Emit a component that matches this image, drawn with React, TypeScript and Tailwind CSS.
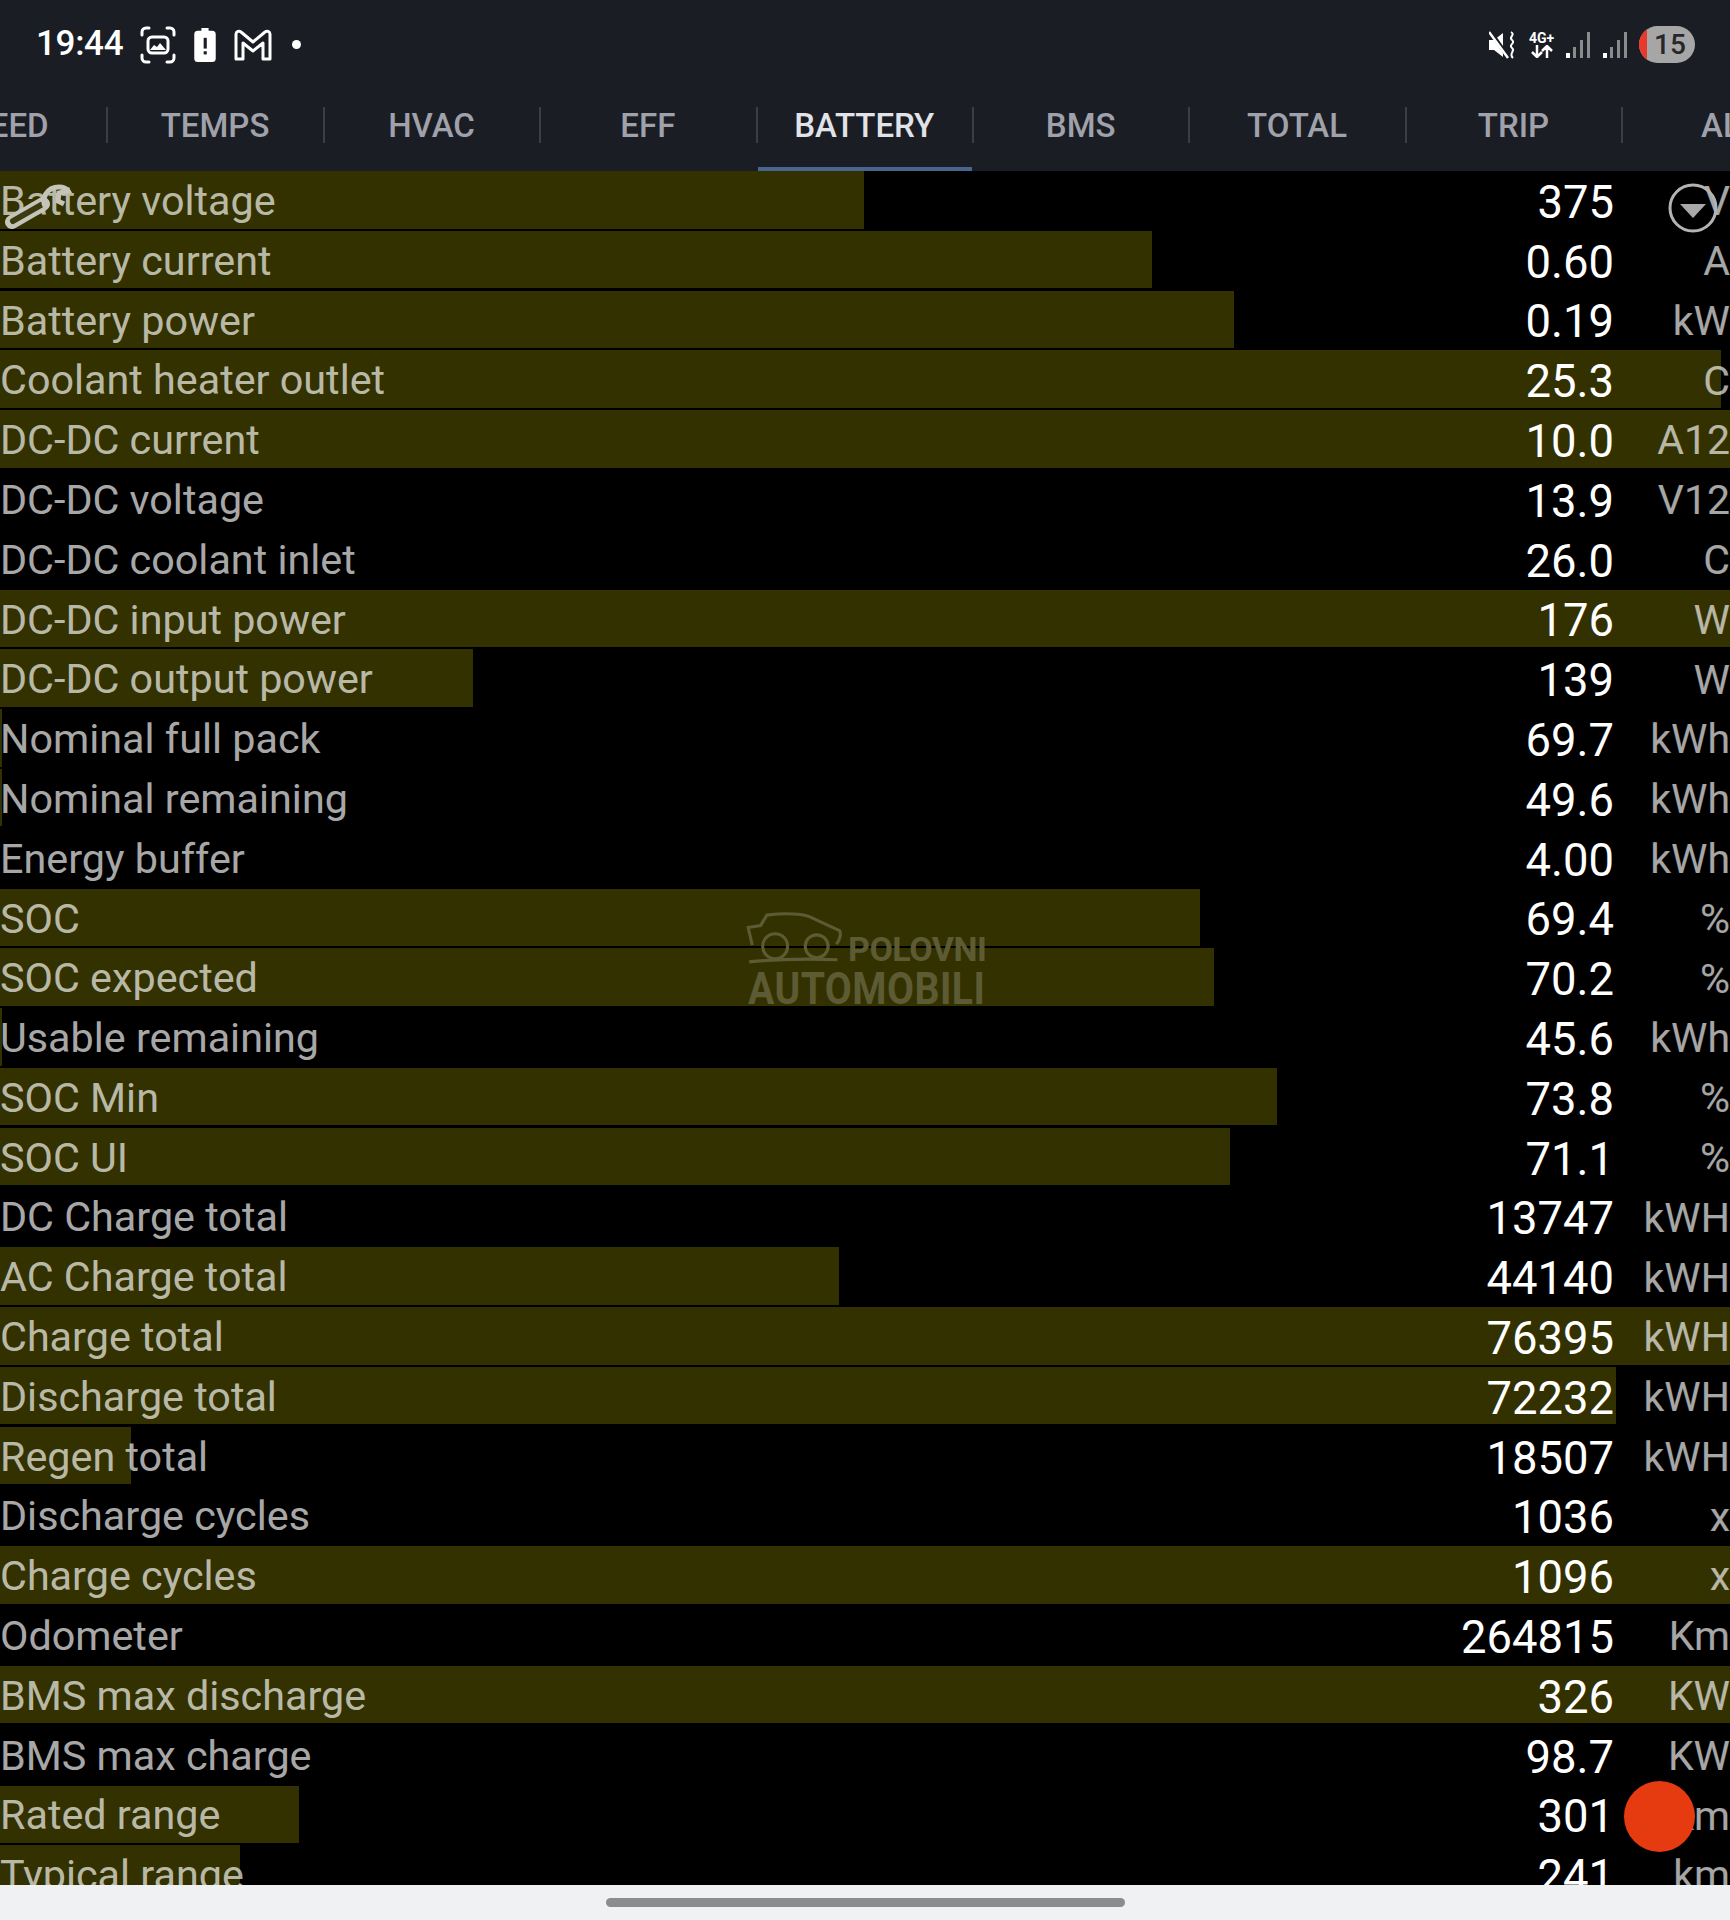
import React from 'react';

const tabs = ['SPEED', 'TEMPS', 'HVAC', 'EFF', 'BATTERY', 'BMS', 'TOTAL', 'TRIP', 'ALL'];

const rows = [
  { label: 'Battery voltage', value: '375', unit: 'V', bar: 864 },
  { label: 'Battery current', value: '0.60', unit: 'A', bar: 1152 },
  { label: 'Battery power', value: '0.19', unit: 'kW', bar: 1234 },
  { label: 'Coolant heater outlet', value: '25.3', unit: 'C', bar: 1721 },
  { label: 'DC-DC current', value: '10.0', unit: 'A12', bar: 1730 },
  { label: 'DC-DC voltage', value: '13.9', unit: 'V12', bar: 0 },
  { label: 'DC-DC coolant inlet', value: '26.0', unit: 'C', bar: 0 },
  { label: 'DC-DC input power', value: '176', unit: 'W', bar: 1730 },
  { label: 'DC-DC output power', value: '139', unit: 'W', bar: 473 },
  { label: 'Nominal full pack', value: '69.7', unit: 'kWh', bar: 2 },
  { label: 'Nominal remaining', value: '49.6', unit: 'kWh', bar: 2 },
  { label: 'Energy buffer', value: '4.00', unit: 'kWh', bar: 0 },
  { label: 'SOC', value: '69.4', unit: '%', bar: 1200 },
  { label: 'SOC expected', value: '70.2', unit: '%', bar: 1214 },
  { label: 'Usable remaining', value: '45.6', unit: 'kWh', bar: 2 },
  { label: 'SOC Min', value: '73.8', unit: '%', bar: 1277 },
  { label: 'SOC UI', value: '71.1', unit: '%', bar: 1230 },
  { label: 'DC Charge total', value: '13747', unit: 'kWH', bar: 0 },
  { label: 'AC Charge total', value: '44140', unit: 'kWH', bar: 839 },
  { label: 'Charge total', value: '76395', unit: 'kWH', bar: 1730 },
  { label: 'Discharge total', value: '72232', unit: 'kWH', bar: 1616 },
  { label: 'Regen total', value: '18507', unit: 'kWH', bar: 131 },
  { label: 'Discharge cycles', value: '1036', unit: 'x', bar: 0 },
  { label: 'Charge cycles', value: '1096', unit: 'x', bar: 1730 },
  { label: 'Odometer', value: '264815', unit: 'Km', bar: 0 },
  { label: 'BMS max discharge', value: '326', unit: 'KW', bar: 1730 },
  { label: 'BMS max charge', value: '98.7', unit: 'KW', bar: 0 },
  { label: 'Rated range', value: '301', unit: 'km', bar: 299 },
  { label: 'Typical range', value: '241', unit: 'km', bar: 240 },
];

function ScreenshotIcon() {
  return (
    <svg width="36" height="38" viewBox="0 0 36 38" fill="none" stroke="white" strokeWidth="3" strokeLinecap="round">
      <path d="M2 9V6a4 4 0 0 1 4-4h3M27 2h3a4 4 0 0 1 4 4v3M34 29v3a4 4 0 0 1-4 4h-3M9 36H6a4 4 0 0 1-4-4v-3" />
      <rect x="8" y="11" width="20" height="16" rx="4" />
      <path d="M10 24l4-5 3 2 3-4 6 7z" fill="white" stroke="none" />
    </svg>
  );
}

function BatteryAlertIcon() {
  return (
    <svg width="22" height="34" viewBox="0 0 24 38">
      <path d="M8 0h8v3h4a4 4 0 0 1 4 4v27a4 4 0 0 1-4 4H4a4 4 0 0 1-4-4V7a4 4 0 0 1 4-4h4z" fill="white" />
      <rect x="10.5" y="11" width="3.5" height="12" fill="#1b1d24" />
      <rect x="10.5" y="26" width="3.5" height="3.5" fill="#1b1d24" />
    </svg>
  );
}

function GmailIcon() {
  return (
    <svg width="38" height="32" viewBox="0 0 38 32" fill="none" stroke="white" strokeWidth="3" strokeLinejoin="round">
      <path d="M2 5a3 3 0 0 1 5-2l12 10L31 3a3 3 0 0 1 5 2v25h-7V14L19 22 9 14v16H2z" />
    </svg>
  );
}

function MuteVibrateIcon() {
  return (
    <svg width="28" height="28" viewBox="0 0 28 28" fill="none">
      <path d="M0 9h5l9-7v24l-9-7H0z" fill="white" />
      <path d="M1 0l19 27" stroke="#1b1d24" strokeWidth="4" />
      <path d="M0 1l19 26" stroke="white" strokeWidth="2.5" />
      <path d="M22 1c5 3-3 5 1 8s-4 5 0 8-4 5 1 10" stroke="white" strokeWidth="2" />
    </svg>
  );
}

function NetworkIcon() {
  return (
    <div className="flex w-[27px] flex-col items-center text-white">
      <span className="text-[14px] leading-[14px] font-bold whitespace-nowrap">4G+</span>
      <svg width="22" height="13" viewBox="0 0 22 13" fill="none" stroke="white" strokeWidth="2.5">
        <path d="M6 0v11M1 7l5 5 5-5M16 13V2M11 6l5-5 5 5" />
      </svg>
    </div>
  );
}

function SignalIcon() {
  return (
    <svg width="25" height="26" viewBox="0 0 25 26">
      <rect x="0" y="21" width="4" height="5" fill="white" />
      <rect x="7" y="15" width="3" height="11" fill="#8b8b8b" />
      <rect x="14" y="8" width="3" height="18" fill="#8b8b8b" />
      <rect x="21" y="0" width="3" height="26" fill="#8b8b8b" />
    </svg>
  );
}

function WrenchOverlay() {
  return (
    <svg className="absolute top-[184px] left-[5px]" width="68" height="48" viewBox="0 0 68 48" fill="none">
      <path d="M7 38L38 20" stroke="#c4c4b8" strokeWidth="14" strokeLinecap="round" />
      <path d="M8 37L36 21" stroke="#3d3a12" strokeWidth="6" strokeLinecap="round" />
      <path d="M41 24c-6-9 1-21 13-21 4 0 7 1 9 4l-9 2-1 8 6 3" stroke="#c4c4b8" strokeWidth="5" fill="none" />
    </svg>
  );
}

function WatermarkLogo() {
  return (
    <div className="absolute top-[912px] left-[746px] text-[#5d5b34]">
      <svg className="absolute top-0 left-0" width="104" height="54" viewBox="0 0 100 52" fill="none" stroke="currentColor" strokeWidth="3">
        <path d="M6 32L2 15l12-2L20 3c16-2 32-1 40 1l30 14c2 3 0 9-3 13" />
        <circle cx="28" cy="33" r="12" />
        <circle cx="68" cy="33" r="11" />
        <path d="M3 48c30-3 60-3 85-2" />
      </svg>
      <span className="absolute top-[17px] left-[102px] text-[34px] leading-[40px] font-bold tracking-[-0.5px] whitespace-nowrap [font-family:'Liberation_Sans_Narrow',Roboto,sans-serif]">
        POLOVNI
      </span>
      <span className="absolute top-[52px] left-[2px] origin-left scale-x-[0.89] text-[44px] leading-[50px] font-bold tracking-[0.5px] whitespace-nowrap [font-family:'Liberation_Sans_Narrow',Roboto,sans-serif]">
        AUTOMOBILI
      </span>
    </div>
  );
}

export default function App() {
  return (
    <div className="relative flex h-[1920px] w-[1730px] flex-col overflow-hidden bg-black [font-family:Roboto,sans-serif]">
      <div className="bg-[#1b1d24]">
        <div className="flex h-[89px] items-center justify-between pr-[35px] pl-[36px]">
          <div className="flex items-center">
            <span className="text-[35px] font-medium tracking-[-0.3px] text-white">19:44</span>
            <div className="ml-[17px] flex items-center gap-[18px]">
              <ScreenshotIcon />
              <BatteryAlertIcon />
              <GmailIcon />
            </div>
            <span className="ml-[20px] h-[9px] w-[9px] rounded-full bg-white" />
          </div>
          <div className="flex items-center">
            <MuteVibrateIcon />
            <div className="ml-[11px]">
              <NetworkIcon />
            </div>
            <div className="ml-[11px]">
              <SignalIcon />
            </div>
            <div className="ml-[12px]">
              <SignalIcon />
            </div>
            <div className="relative ml-[11px] flex h-[37px] w-[56px] items-center justify-center overflow-hidden rounded-full bg-[#a6a6a6] pl-[6px]">
              <span className="absolute top-0 bottom-0 left-0 w-[8px] bg-[#e8392b]" />
              <span className="text-[28px] leading-none font-medium text-[#26272b]">15</span>
            </div>
          </div>
        </div>
        <div className="-ml-[108px] flex h-[82px] w-[2000px]">
          {tabs.map((tab, i) => (
            <div key={tab} className="relative flex h-full w-[216.4px] shrink-0 items-center justify-center pr-[3px] pb-[8px]">
              <span className={tab === 'BATTERY' ? 'text-[33px] font-medium text-[#e2e3e8]' : 'text-[33px] font-medium text-[#a0a2ab]'}>
                {tab}
              </span>
              {i < tabs.length - 1 && (
                <span className="absolute top-[18px] right-0 h-[36px] w-[2px] bg-[#3c3e45]" />
              )}
              {tab === 'BATTERY' && (
                <span className="absolute right-[2px] bottom-0 left-0 h-[4px] bg-[#47658f]" />
              )}
            </div>
          ))}
        </div>
      </div>

      <div className="min-h-0 flex-1 overflow-hidden">
        {rows.map((row) => (
          <div key={row.label} className="relative flex h-[59.8px] items-center">
            {row.bar > 0 && (
              <div className="absolute top-0 left-0 h-[57.5px] bg-[#333100]" style={{ width: row.bar }} />
            )}
            <span className="relative flex-1 pt-[2px] text-[41.3px] whitespace-nowrap text-white/[0.68]">{row.label}</span>
            <span className="relative w-[300px] pt-[4px] text-right text-[45.4px] text-white">{row.value}</span>
            <span className="relative w-[116px] pt-[2px] text-right text-[41px] whitespace-nowrap text-white/[0.65]">{row.unit}</span>
          </div>
        ))}
      </div>

      <div className="flex h-[35px] items-center justify-center bg-[#f0f1f3]">
        <div className="h-[9px] w-[519px] rounded-full bg-[#8c8c8e]" />
      </div>

      <WatermarkLogo />
      <WrenchOverlay />
      <svg className="absolute top-[182px] left-[1667px]" width="52" height="52" viewBox="0 0 52 52" fill="none">
        <circle cx="26" cy="26" r="23" stroke="#b3b3b3" strokeWidth="3" />
        <path d="M13 22h26L26 36z" fill="#a8a8a8" />
      </svg>
      <div className="absolute top-[1781px] left-[1624px] h-[71px] w-[71px] rounded-full bg-[#e63a10]" />
    </div>
  );
}
